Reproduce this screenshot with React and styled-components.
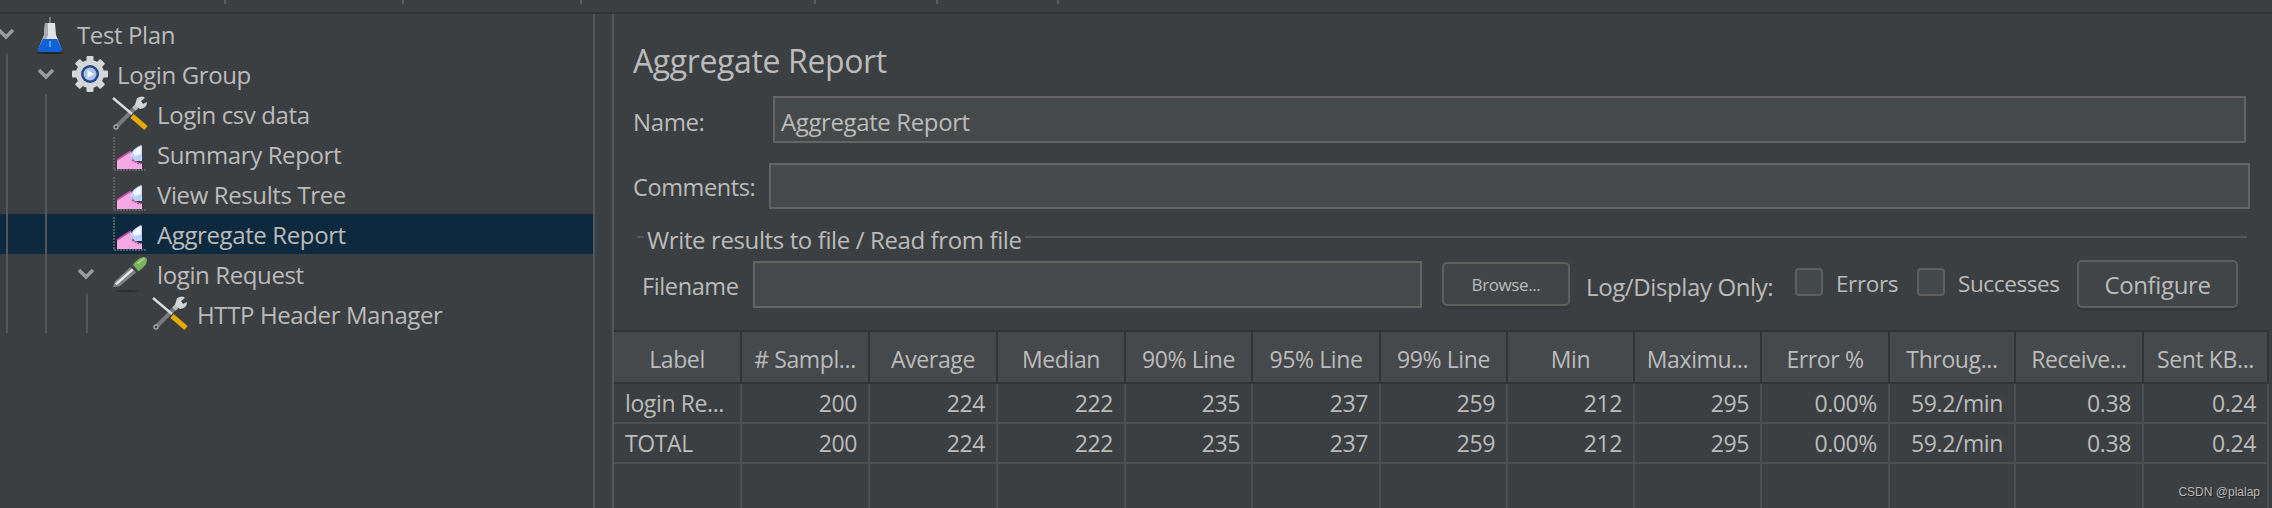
import styled, { createGlobalStyle } from "styled-components";

const COLUMNS = [
  "Label", "# Sampl...", "Average", "Median", "90% Line", "95% Line", "99% Line",
  "Min", "Maximu...", "Error %", "Throug...", "Receive...", "Sent KB...",
];
const ROWS = [
  ["login Re...", "200", "224", "222", "235", "237", "259", "212", "295", "0.00%", "59.2/min", "0.38", "0.24"],
  ["TOTAL", "200", "224", "222", "235", "237", "259", "212", "295", "0.00%", "59.2/min", "0.38", "0.24"],
  ["", "", "", "", "", "", "", "", "", "", "", "", ""],
];
const TICKS = [226, 178, 178, 234, 122, 121];

const Flask = () => (
  <svg width="32" height="39" viewBox="0 0 32 39">
    <path d="M15 2 L17 2 L17 8 L15 8Z" fill="#77797b" />
    <path d="M11 8 L21 8 L22 20 L28 35 L4 35 L10 20Z" fill="#dfe3e6" />
    <path d="M11 8 L14 8 L14 20 L8 34 L4 35 L10 20Z" fill="#a9adb1" />
    <path d="M9 24 L23 24 L28 34 Q28 37 25 37 L7 37 Q4 37 4 34Z" fill="#0f63d6" />
    <path d="M15 26 L17 26 L17 32 L15 32Z" fill="#5b9cf0" />
    <ellipse cx="16" cy="38" rx="14" ry="1" fill="#22252a" />
  </svg>
);

const Gear = () => (
  <svg width="36" height="38" viewBox="0 0 36 38">
    <g fill="#d4d6d8">
      <circle cx="18" cy="19" r="14" />
      {[0, 45, 90, 135, 180, 225, 270, 315].map((a) => (
        <rect key={a} x="14.5" y="1" width="7" height="7" rx="1" transform={`rotate(${a} 18 19)`} />
      ))}
    </g>
    <circle cx="18" cy="19" r="9" fill="#27468a" />
    <circle cx="18" cy="19" r="6.5" fill="#a9c3e8" />
    <path d="M15.5 15 L22 19 L15.5 23Z" fill="#f4f7fb" />
  </svg>
);

const Tools = () => (
  <svg width="36" height="36" viewBox="0 0 36 36">
    <path d="M27 8 L5 30" stroke="#77797b" strokeWidth="4" />
    <circle cx="4" cy="31" r="2" fill="none" stroke="#a0a0a0" strokeWidth="1.5" />
    <path d="M22 13 L29 6" stroke="#bdbdbd" strokeWidth="5" />
    <path d="M25 2 Q31 -1 33 2 L29 5 L31 8 L35 6 Q35 12 28 13 L23 9Z" fill="#d5d5d5" />
    <path d="M1 2 L20 18" stroke="#d8d8d8" strokeWidth="2.5" />
    <path d="M20 20 L34 32" stroke="#e5a900" strokeWidth="5" />
  </svg>
);

const Chart = () => (
  <svg width="34" height="36" viewBox="0 0 34 36">
    <path d="M1 1 L1 34 L33 34" fill="none" stroke="#6a6d70" strokeWidth="1.5" strokeDasharray="2 1" />
    <path d="M4 33 L4 24 L18 15 L20 24 L26 27 L29 27 L29 33Z" fill="#f4a9e4" />
    <path d="M4 24 L18 15" fill="none" stroke="#cc4fa8" strokeWidth="1.5" />
    <path d="M19 24 L26 28 L29 27" fill="none" stroke="#b0509c" strokeWidth="1.5" strokeDasharray="2 1" />
    <path d="M17 20 Q19 13 28 9 L29 10 L29 25 L22 25Z" fill="#b9d2f5" />
    <path d="M20 17 Q22 13 28 10 L28 18 L22 20Z" fill="#f4f8ff" />
  </svg>
);

const Dropper = () => (
  <svg width="38" height="38" viewBox="0 0 38 38">
    <ellipse cx="16" cy="37" rx="13" ry="1" fill="#2b2d30" />
    <path d="M1 33 L3 27 L20 11 L26 17 L8 32Z" fill="#808284" />
    <path d="M4 30 L22 14" stroke="#e8e8e8" strokeWidth="2.5" />
    <path d="M19 11 L22 8 L29 15 L26 18Z" fill="#444648" />
    <path d="M22 9 Q28 2 33 1 Q37 1 37 5 Q36 11 28 16Z" fill="#76b25f" />
    <path d="M27 8 Q31 4 34 3" fill="none" stroke="#a5d492" strokeWidth="2" />
  </svg>
);

const Chevron = () => (
  <svg width="18" height="12" viewBox="0 0 18 12">
    <path d="M2 2 L9 9 L16 2" fill="none" stroke="#9a9c9e" strokeWidth="3.5" />
  </svg>
);

const TREE = [
  { level: 0, label: "Test Plan", Icon: Flask, open: true },
  { level: 1, label: "Login Group", Icon: Gear, open: true },
  { level: 2, label: "Login csv data", Icon: Tools },
  { level: 2, label: "Summary Report", Icon: Chart },
  { level: 2, label: "View Results Tree", Icon: Chart },
  { level: 2, label: "Aggregate Report", Icon: Chart, selected: true },
  { level: 2, label: "login Request", Icon: Dropper, open: true },
  { level: 3, label: "HTTP Header Manager", Icon: Tools },
];

const App = () => {
  return (
    <Page>
      <GlobalStyle />
      <TopBar>
        {TICKS.map((w, i) => (
          <Tick key={i} $width={w} />
        ))}
      </TopBar>
      <Body>
        <TreePanel>
          <Guide $x={6} $top={40} />
          <Guide $x={45} $top={80} />
          <Guide $x={86} $top={280} />
          {TREE.map((node) => (
            <TreeRow key={node.label} $level={node.level} $selected={node.selected}>
              <ChevronSlot>{node.open && <Chevron />}</ChevronSlot>
              <IconSlot>
                <node.Icon />
              </IconSlot>
              <span>{node.label}</span>
            </TreeRow>
          ))}
        </TreePanel>
        <Gutter />
        <Main>
          <Title>Aggregate Report</Title>
          <NameRow>
            <NameLabel>Name:</NameLabel>
            <TextBox>Aggregate Report</TextBox>
          </NameRow>
          <CommentsRow>
            <CommentsLabel>Comments:</CommentsLabel>
            <TextBox />
          </CommentsRow>
          <Legend>
            <LegendText>Write results to file / Read from file</LegendText>
          </Legend>
          <FileRow>
            <FileLabel>Filename</FileLabel>
            <FileBox />
            <BrowseButton>Browse...</BrowseButton>
            <LogLabel>Log/Display Only:</LogLabel>
            <Check />
            <CheckLabel $width={81}>Errors</CheckLabel>
            <Check />
            <CheckLabel $width={119}>Successes</CheckLabel>
            <ConfigureButton>Configure</ConfigureButton>
          </FileRow>
          <Table>
            {COLUMNS.map((c) => (
              <HeadCell key={c}>{c}</HeadCell>
            ))}
            {ROWS.map((row, r) =>
              row.map((v, i) => (
                <Cell key={`${r}-${i}`} $left={i === 0} $last={r === 2}>
                  {v}
                </Cell>
              ))
            )}
          </Table>
          <Watermark>CSDN @plalap</Watermark>
        </Main>
      </Body>
    </Page>
  );
};

const GlobalStyle = createGlobalStyle`
  html, body {
    margin: 0;
    padding: 0;
    background: #3c3f41;
    overflow: hidden;
  }
`;

const Page = styled.div`
  width: 2272px;
  height: 508px;
  display: flex;
  flex-direction: column;
  overflow: hidden;
  background: #3c3f41;
  color: #bbbbbb;
  font-family: "Open Sans", "Liberation Sans", sans-serif;
  font-size: 24px;
  letter-spacing: -0.016em;
`;

const TopBar = styled.div`
  height: 12px;
  flex: none;
  display: flex;
  border-bottom: 2px solid #313335;
`;

const Tick = styled.div`
  width: ${(p) => p.$width}px;
  height: 4px;
  border-right: 2px solid #5a5d5f;
  box-sizing: border-box;
`;

const Body = styled.div`
  flex: 1;
  display: flex;
  min-height: 0;
`;

const TreePanel = styled.div`
  position: relative;
  width: 593px;
  flex: none;
  overflow: hidden;
  border-right: 2px solid #55585a;
`;

const Guide = styled.div`
  position: absolute;
  z-index: 1;
  left: ${(p) => p.$x}px;
  top: ${(p) => p.$top}px;
  height: ${(p) => 319 - p.$top}px;
  width: 2px;
  background: #54575a;
`;

const TreeRow = styled.div`
  height: 40px;
  display: flex;
  align-items: center;
  padding-left: ${(p) => p.$level * 40}px;
  background: ${(p) => (p.$selected ? "#0d293e" : "transparent")};
  white-space: nowrap;
`;

const ChevronSlot = styled.div`
  width: 32px;
  flex: none;
  display: flex;
  svg {
    margin-left: -3px;
  }
`;

const IconSlot = styled.div`
  width: 36px;
  flex: none;
  margin-right: 9px;
  display: flex;
  justify-content: center;
`;

const Gutter = styled.div`
  width: 17px;
  flex: none;
  border-right: 2px solid #55585a;
`;

const Main = styled.div`
  position: relative;
  flex: 1;
  min-width: 0;
  display: flex;
  flex-direction: column;
  & > * {
    flex: none;
  }
`;

const Title = styled.div`
  font-size: 32px;
  height: 82px;
  box-sizing: border-box;
  padding: 10px 0 0 19px;
  display: flex;
  align-items: center;
`;

const NameRow = styled.div`
  display: flex;
  align-items: center;
  height: 47px;
  padding-right: 26px;
  margin-bottom: 20px;
`;

const CommentsRow = styled(NameRow)`
  height: 46px;
  padding-right: 22px;
  margin-bottom: 0;
`;

const NameLabel = styled.div`
  width: 159px;
  flex: none;
  padding: 4px 0 0 19px;
  box-sizing: border-box;
`;

const CommentsLabel = styled(NameLabel)`
  width: 155px;
  padding-top: 2px;
  font-size: 23.5px;
`;

const TextBox = styled.div`
  flex: 1;
  height: 100%;
  box-sizing: border-box;
  background: #45494a;
  border: 2px solid #646464;
  display: flex;
  align-items: center;
  padding: 3px 0 0 6px;
`;

const Legend = styled.div`
  margin: 16px 25px 9px 23px;
  height: 26px;
  display: flex;
  align-items: center;
  gap: 3px;
  &::before {
    content: "";
    width: 7px;
    height: 2px;
    background: #55585a;
    margin-top: -2px;
  }
  &::after {
    content: "";
    flex: 1;
    height: 2px;
    background: #55585a;
    margin-top: -2px;
  }
`;

const LegendText = styled.span`
  padding-top: 3px;
`;

const FileRow = styled.div`
  height: 48px;
  display: flex;
  align-items: center;
  padding-left: 28px;
`;

const FileLabel = styled.div`
  width: 111px;
  flex: none;
  padding-top: 4px;
  font-size: 23.5px;
`;

const FileBox = styled.div`
  width: 669px;
  height: 47px;
  flex: none;
  box-sizing: border-box;
  background: #45494a;
  border: 2px solid #646464;
`;

const BrowseButton = styled.div`
  width: 128px;
  height: 44px;
  flex: none;
  margin-left: 20px;
  box-sizing: border-box;
  display: flex;
  align-items: center;
  justify-content: center;
  background: #414547;
  border: 2px solid #5e6060;
  border-radius: 5px;
  box-shadow: 0 3px 0 #36393b;
  font-size: 17px;
`;

const LogLabel = styled.div`
  width: 209px;
  flex: none;
  margin-left: 16px;
  padding-top: 4px;
  white-space: nowrap;
`;

const Check = styled.div`
  width: 28px;
  height: 28px;
  flex: none;
  margin-top: -4px;
  box-sizing: border-box;
  background: #43494a;
  border: 2px solid #5e6060;
  border-radius: 4px;
`;

const CheckLabel = styled.div`
  margin-left: 13px;
  margin-top: -2px;
  width: ${(p) => p.$width}px;
  flex: none;
  white-space: nowrap;
  font-size: 22.5px;
`;

const ConfigureButton = styled(BrowseButton)`
  width: 161px;
  height: 48px;
  margin-left: 0;
  font-size: 24px;
`;

const Table = styled.div`
  margin: 22px 3px 0 0;
  display: grid;
  grid-template-columns: 128px 128px 128px 128px 127px 128px 127px 127px 127px 128px 126px 128px 125px;
  grid-template-rows: 52px 40px 40px 44px;
  border-top: 2px solid #313335;
  font-size: 23px;
`;

const HeadCell = styled.div`
  background: #45494b;
  border-right: 2px solid #323537;
  border-bottom: 2px solid #323537;
  display: flex;
  align-items: center;
  justify-content: center;
  padding-top: 3px;
  white-space: nowrap;
`;

const Cell = styled.div`
  border-right: 2px solid #4c4e50;
  border-bottom: ${(p) => (p.$last ? "none" : "2px solid #4c4e50")};
  display: flex;
  align-items: center;
  justify-content: ${(p) => (p.$left ? "flex-start" : "flex-end")};
  padding: 0 11px;
  white-space: nowrap;
`;

const Watermark = styled.div`
  position: absolute;
  right: 12px;
  bottom: 9px;
  font-family: "Liberation Sans", sans-serif;
  font-size: 12px;
  letter-spacing: 0;
  color: #b9b9b9;
  text-shadow: 1px 1px 1px #222;
`;

export default App;
